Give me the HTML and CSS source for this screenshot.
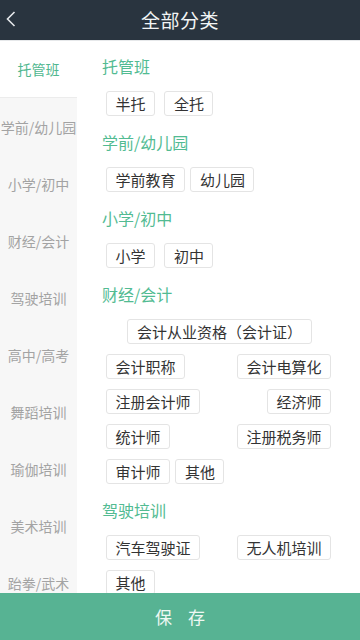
FILE: index.html
```html
<!DOCTYPE html>
<html lang="zh-CN">
<head>
    <meta charset="UTF-8">
    <meta name="viewport" content="width=device-width, initial-scale=1.0">
    <title>全部分类</title>
    <link rel="stylesheet" href="styles.css">
</head>
<body>

    <div class="page">
        <div class="top-bar">
            <svg class="back-icon" viewBox="0 0 10 16">
                <polyline points="8.5,1 1.5,8 8.5,15"></polyline>
            </svg>
            <div class="top-title">全部分类</div>
        </div>

        <div class="main">
            <ul class="side-menu">
                <li class="side-item active">托管班</li>
                <li class="side-item">学前/幼儿园</li>
                <li class="side-item">小学/初中</li>
                <li class="side-item">财经/会计</li>
                <li class="side-item">驾驶培训</li>
                <li class="side-item">高中/高考</li>
                <li class="side-item">舞蹈培训</li>
                <li class="side-item">瑜伽培训</li>
                <li class="side-item">美术培训</li>
                <li class="side-item">跆拳/武术</li>
            </ul>

            <div class="content">
                <div class="section">
                    <div class="section-title">托管班</div>
                    <div class="tag-list loose">
                        <span class="tag">半托</span>
                        <span class="tag">全托</span>
                    </div>
                </div>

                <div class="section">
                    <div class="section-title">学前/幼儿园</div>
                    <div class="tag-list">
                        <span class="tag">学前教育</span>
                        <span class="tag">幼儿园</span>
                    </div>
                </div>

                <div class="section">
                    <div class="section-title">小学/初中</div>
                    <div class="tag-list loose">
                        <span class="tag">小学</span>
                        <span class="tag">初中</span>
                    </div>
                </div>

                <div class="section">
                    <div class="section-title">财经/会计</div>
                    <div class="tag-list">
                        <span class="tag tag-center">会计从业资格（会计证）</span>
                        <span class="tag">会计职称</span>
                        <span class="tag">会计电算化</span>
                        <span class="tag">注册会计师</span>
                        <span class="tag">经济师</span>
                        <span class="tag">统计师</span>
                        <span class="tag">注册税务师</span>
                        <span class="tag">审计师</span>
                        <span class="tag">其他</span>
                    </div>
                </div>

                <div class="section">
                    <div class="section-title">驾驶培训</div>
                    <div class="tag-list">
                        <span class="tag">汽车驾驶证</span>
                        <span class="tag">无人机培训</span>
                        <span class="tag">其他</span>
                    </div>
                </div>
            </div>
        </div>

        <button class="save-button">保存</button>
    </div>

</body>
</html>
```

FILE: styles.css
```css
body, html {
    margin: 0;
    padding: 0;
    background-color: #ffffff;
    font-family: "Noto Sans CJK SC", "Noto Sans", sans-serif;
}

.page {
    display: flex;
    flex-direction: column;
    height: 100vh;
    overflow: hidden;
}

/* Dark header with back arrow */
.top-bar {
    position: relative;
    flex: 0 0 40px;
    display: flex;
    align-items: center;
    justify-content: center;
    background-color: #29343f;
    border-bottom: 1px solid #e6e8ea;
}

.back-icon {
    position: absolute;
    left: 6px;
    top: 11px;
    width: 10px;
    height: 16px;
    fill: none;
    stroke: #e4e7ea;
    stroke-width: 1.6;
}

.top-title {
    color: #f2f4f5;
    font-size: 19px;
    letter-spacing: 0.5px;
    margin-top: -2px;
}

.main {
    flex: 1;
    display: flex;
    overflow: hidden;
}

/* Left category menu */
.side-menu {
    flex: 0 0 77px;
    margin: 0;
    padding: 0;
    list-style: none;
    background-color: #f7f7f7;
}

.side-item {
    height: 57px;
    display: flex;
    align-items: center;
    justify-content: center;
    white-space: nowrap;
    font-size: 14px;
    color: #a3a3a3;
    box-sizing: border-box;
}

.side-item.active {
    background-color: #ffffff;
    color: #4fb78f;
    border-bottom: 1px solid #ececec;
}

/* Right tag area */
.content {
    flex: 1;
    padding: 9px 0 0 25px;
}

.section-title {
    padding-top: 4px;
    margin-bottom: 13px;
    font-size: 16px;
    line-height: 24px;
    color: #52bb92;
}

.tag-list {
    width: 227px;
    margin-left: 4px;
    text-align: justify;
    line-height: 0;
    font-size: 15px;
}

.tag {
    display: inline-block;
    vertical-align: top;
    height: 23px;
    line-height: 23px;
    padding: 0 8.5px;
    margin: 0 2px 10px 0;
    border: 1px solid #e4e4e4;
    border-radius: 3px;
    font-size: 15px;
    color: #333333;
    white-space: nowrap;
}

.tag-list.loose .tag {
    margin-right: 6px;
}

.tag.tag-center {
    display: table;
    margin: 0 auto 10px;
}

/* Bottom save bar */
.save-button {
    flex: 0 0 47px;
    width: 100%;
    border: none;
    padding: 0 0 0 16px;
    background-color: #57b393;
    color: #eef8f3;
    font-family: inherit;
    font-size: 17px;
    letter-spacing: 16px;
}
```
